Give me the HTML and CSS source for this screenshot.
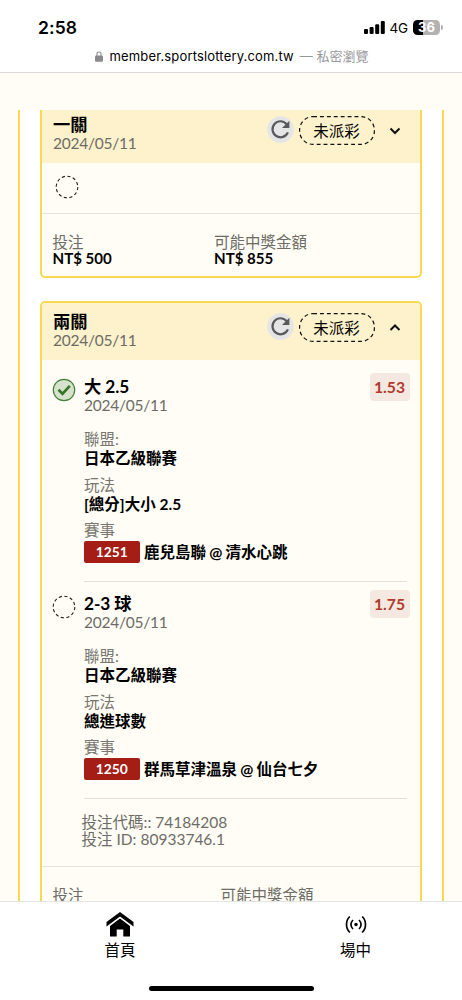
FILE: index.html
```html
<!DOCTYPE html>
<html lang="zh-Hant">
<head>
<meta charset="utf-8">
<title>投注紀錄</title>
<link rel="stylesheet" href="styles.css">
</head>
<body>
<svg class="defs" width="0" height="0">
  <symbol id="refresh" viewBox="0 0 27 27"><circle cx="13.5" cy="13.5" r="13.3" fill="#e5e5e6"/><path d="M19.7 8.2A8 8 0 1 0 20.9 16.3" fill="none" stroke="#58595b" stroke-width="2.2"/><path d="M22.4 4.7v7.4h-7.4z" fill="#58595b"/></symbol>
  <symbol id="pill" viewBox="0 0 76 29"><rect x=".6" y=".6" width="74.8" height="27.8" rx="13.5" fill="none" stroke="#111" stroke-width="1.2" stroke-dasharray="3.9 3"/></symbol>
  <symbol id="pending" viewBox="0 0 24 24"><circle cx="12" cy="12" r="10.8" fill="none" stroke="#222" stroke-width="1.1" stroke-dasharray="3.2 2.455"/></symbol>
</svg>
<header class="phone">
  <div class="status">
    <span class="time">2:58</span>
    <div class="signals">
      <svg width="21" height="13" viewBox="0 0 21 13"><rect x="0" y="8" width="4" height="5" rx="1.1"/><rect x="5.6" y="6" width="4" height="7" rx="1.1"/><rect x="11.2" y="3.3" width="4" height="9.7" rx="1.1"/><rect x="16.8" y="0" width="4" height="13" rx="1.1"/></svg>
      <span class="network">4G</span>
      <span class="battery">36</span>
      <span class="battery-tip"></span>
    </div>
  </div>
  <div class="address">
    <svg width="8" height="11" viewBox="0 0 8 11"><path d="M2 5V3a2 2 0 0 1 4 0v2" fill="none" stroke="#8a8a8d" stroke-width="1.1"/><rect y="4.5" width="8" height="6.3" rx="1.2" fill="#8a8a8d"/></svg>
    <span class="url">member.sportslottery.com.tw</span>
    <span class="private">— 私密瀏覽</span>
  </div>
</header>
<main class="page">
  <div class="panel">
    <section class="card first">
      <div class="head">
        <div class="heading"><div class="title">一關</div><div class="date">2024/05/11</div></div>
        <svg class="refresh"><use href="#refresh"/></svg>
        <div class="pill"><svg><use href="#pill"/></svg><span>未派彩</span></div>
        <svg class="chevron" viewBox="0 0 12 8"><path d="M1.5 1.5 6 6l4.500-4.500"/></svg>
      </div>
      <div class="legs-closed"><svg class="state"><use href="#pending"/></svg></div>
      <div class="totals">
        <div class="stake"><div class="label">投注</div><div class="amount">NT$ 500</div></div>
        <div><div class="label">可能中獎金額</div><div class="amount">NT$ 855</div></div>
      </div>
    </section>
    <section class="card">
      <div class="head">
        <div class="heading"><div class="title">兩關</div><div class="date">2024/05/11</div></div>
        <svg class="refresh"><use href="#refresh"/></svg>
        <div class="pill"><svg><use href="#pill"/></svg><span>未派彩</span></div>
        <svg class="chevron" viewBox="0 0 12 8"><path d="M1.500 6 6 1.500 10.500 6"/></svg>
      </div>
      <div class="legs">
        <div class="leg">
          <svg class="state leg-state" viewBox="0 0 24 24"><circle cx="12" cy="12" r="10.700" fill="#d7e2cd" stroke="#46813a" stroke-width="1.200"/><path d="M6.500 11.800l4 4 7.300-8" fill="none" stroke="#367426" stroke-width="2.700"/></svg>
          <div class="detail">
            <div class="leg-top">
              <div><div class="title">大 2.5</div><div class="date">2024/05/11</div></div>
              <span class="odds">1.53</span>
            </div>
            <dl><dt>聯盟:</dt><dd>日本乙級聯賽</dd><dt>玩法</dt><dd>[總分]大小 2.5</dd><dt>賽事</dt></dl>
            <div class="match"><span class="code">1251</span><span>鹿兒島聯 @ 清水心跳</span></div>
          </div>
        </div>
        <div class="leg">
          <svg class="state leg-state"><use href="#pending"/></svg>
          <div class="detail">
            <div class="leg-top">
              <div><div class="title">2-3 球</div><div class="date">2024/05/11</div></div>
              <span class="odds">1.75</span>
            </div>
            <dl><dt>聯盟:</dt><dd>日本乙級聯賽</dd><dt>玩法</dt><dd>總進球數</dd><dt>賽事</dt></dl>
            <div class="match"><span class="code">1250</span><span>群馬草津溫泉 @ 仙台七夕</span></div>
          </div>
        </div>
      </div>
      <div class="reference"><div>投注代碼:: 74184208</div><div>投注 ID: 80933746.1</div></div>
      <div class="totals wide">
        <div class="stake"><div class="label">投注</div></div>
        <div><div class="label">可能中獎金額</div></div>
      </div>
    </section>
  </div>
</main>
<nav class="tabs">
  <div class="tab">
    <svg width="28" height="25" viewBox="0 0 28 25"><path d="M14 0 27.500 10v4.500L14 4.500.5 14.500V10z"/><path d="M14 6.500 24 14v10.500h-6.700v-7h-6.600v7H4V14z"/></svg>
    <span>首頁</span>
  </div>
  <div class="tab live">
    <svg width="22" height="25" viewBox="0 0 22 25"><g fill="none" stroke="#000" stroke-width="1.700"><path d="M4.800 4.500c-4.400 4.300-4.400 11.700 0 16M17.200 4.500c4.400 4.300 4.400 11.700 0 16M8 8c-2.700 2.500-2.700 6.500 0 9M14 8c2.700 2.500 2.700 6.500 0 9"/></g><circle cx="11" cy="12.500" r="1.700"/></svg>
    <span>場中</span>
  </div>
  <div class="home-bar"></div>
</nav>
</body>
</html>
```
FILE: styles.css
```css
* { box-sizing: border-box; }
body {
  margin: 0;
  height: 1000px;
  display: flex;
  flex-direction: column;
  overflow: hidden;
  background: #fffdf5;
  color: #000;
  font: 15.5px/18px Lato, "Noto Sans CJK TC", sans-serif;
}
svg { display: block; flex: none; }
.defs { position: absolute; }
.phone { height: 73px; flex: none; background: #fff; border-bottom: 1px solid #d9d9dc; font-family: Inter, "Noto Sans CJK TC", sans-serif; }
.status { height: 47px; padding: 17px 19px 0 38px; display: flex; justify-content: space-between; }
.time { font-size: 17.5px; font-weight: 600; line-height: 22px; letter-spacing: .1px; }
.signals { display: flex; align-items: center; height: 21px; }
.network { font-size: 13.500px; margin: 0 5px; letter-spacing: -.2px; }
.battery { width: 27px; height: 15px; border-radius: 4.500px; background: linear-gradient(90deg, #000 10px, #b2b2b2 10px); color: #fff; font-size: 13px; line-height: 15px; font-weight: 700; text-align: center; }
.battery-tip { width: 2px; height: 5px; margin-left: 1px; background: #b2b2b2; border-radius: 0 2px 2px 0; }
.address { display: flex; align-items: center; height: 18px; padding-left: 95px; font-size: 13px; }
.url { margin: 0 6px 0 6.5px; letter-spacing: .16px; }
.private { color: #98989b; white-space: nowrap; }

.page { flex: none; height: 791px; margin-top: 37px; overflow: hidden; padding: 0 18px; }
.panel { height: 900px; padding: 0 20px; border: solid #f9d951; border-width: 0 2px; background: #fff; }
.card { border: 2px solid #f9d951; border-radius: 5px; background: #fffdf5; margin-bottom: 23px; overflow: hidden; }
.first { margin-top: -6px; height: 174px; }
.head { height: 57px; background: #fdf2cc; display: flex; padding: 9px 19px 0 11px; }
.heading { flex: 1; }
.title { font-size: 17.300px; line-height: 19px; font-weight: 700; letter-spacing: -.1px; }
.date { color: #6d6c66; letter-spacing: -.25px; }
.refresh { width: 27px; height: 27px; margin-top: 1px; }
.pill { width: 76px; height: 29px; margin: 1px 14.500px 0 5px; position: relative; text-align: center; line-height: 30px; }
.pill svg { position: absolute; inset: 0; width: 76px; height: 29px; }
.chevron { width: 12px; height: 8px; margin-top: 12px; fill: none; stroke: #111; stroke-width: 2; }
.state { width: 24px; height: 24px; }
.leg-state { margin: 1px -.5px 0 .5px; }
.legs-closed { height: 50px; padding: 12px 0 0 13px; }
.totals { display: flex; border-top: 1px solid #e7e4dc; padding: 20px 11px 0 10.500px; line-height: 17px; }
.stake { width: 161.500px; }
.wide .stake { width: 168px; }
.label { color: #6d6c66; }
.amount { font-weight: 700; font-size: 15.1px; line-height: 15px; }

.legs { padding: 5px 13px 0 9.500px; }
.leg { height: 217px; padding-top: 12px; display: flex; gap: 8.500px; }
.detail { flex: 1; border-bottom: 1px solid #e4e1d9; margin-top: -12px; padding-top: 12px; }
.leg-top { display: flex; justify-content: space-between; }
.odds { width: 40px; height: 28px; margin: -4px -2.500px -9px 0; border-radius: 4px; background: #f5e8e0; color: #b03a2e; font-size: 15.7px; line-height: 29px; font-weight: 700; text-align: center; }
dl { margin: 16px 0 0; }
dt { color: #777670; }
dd { margin: 0 0 7.500px; line-height: 20px; font-weight: 700; }
.match { display: flex; align-items: center; gap: 4.500px; margin-top: 2px; font-weight: 700; white-space: nowrap; word-spacing: -.6px; }
.code { width: 55.500px; height: 22px; border-radius: 2px; background: #a51e16; color: #fff; font-size: 13.8px; line-height: 22px; text-align: center; }
.reference { height: 67px; padding: 15px 0 0 39.500px; line-height: 17px; color: #6d6c66; }

.tabs { height: 99px; flex: none; background: #fff; border-top: 1px solid #e4e4e4; display: grid; grid-template-columns: 240px 231px; grid-template-rows: 84px 6px; font-size: 15.500px; }
.tab { display: flex; flex-direction: column; align-items: center; padding-top: 9.500px; gap: 4.500px; }
.home-bar { grid-column: 1 / 3; width: 165px; height: 5px; margin-left: 148.500px; border-radius: 3px; background: #000; }
```
